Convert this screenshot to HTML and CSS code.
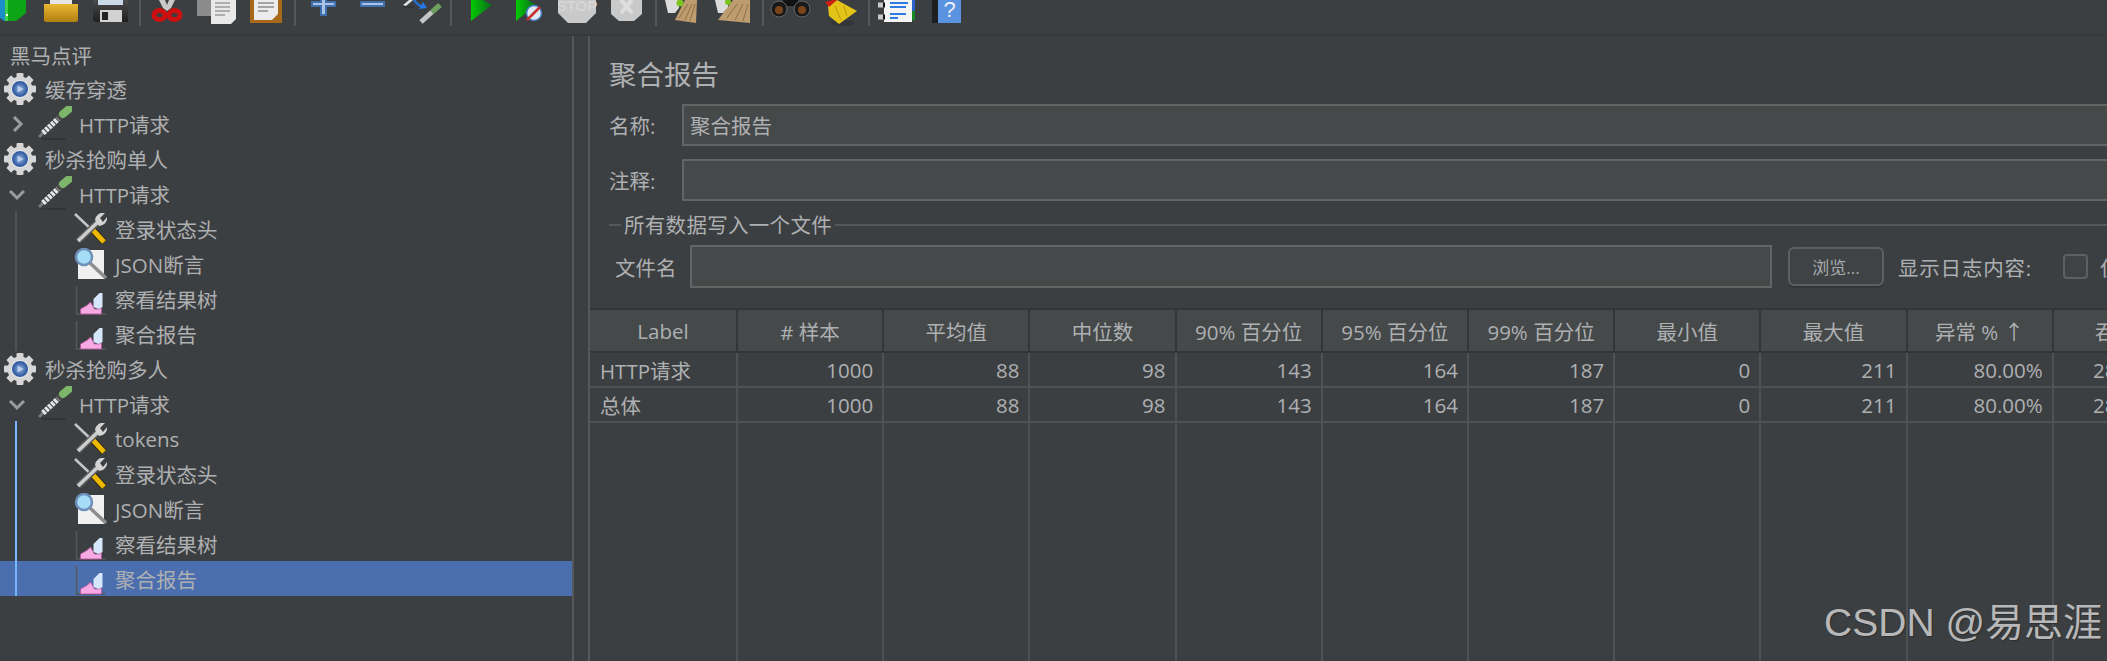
FILE: index.html
```html
<!DOCTYPE html>
<html lang="zh">

<head>
    <meta charset="utf-8">
    <title>聚合报告</title>
    <link rel="stylesheet" href="styles.css">
</head>

<body>
    <!-- shared icons for the tree -->
    <svg class="defs">
        <defs>
            <radialGradient id="hub"><stop offset="0" stop-color="#8fb0e0"/><stop offset="1" stop-color="#1f4a94"/></radialGradient>
            <linearGradient id="gold" x1="0" y1="0" x2="0" y2="1"><stop offset="0" stop-color="#eab733"/><stop offset="1" stop-color="#b07f12"/></linearGradient>
            <linearGradient id="run" x1="0" y1="0" x2="1" y2="0"><stop offset="0" stop-color="#05c905"/><stop offset="1" stop-color="#0a6a1c"/></linearGradient>
            <linearGradient id="disk" x1="0" y1="0" x2="0" y2="1"><stop offset="0" stop-color="#4a4a4c"/><stop offset="1" stop-color="#1f1f20"/></linearGradient>
        </defs>
        <symbol id="i-gear" viewBox="0 0 34 32">
            <g fill="#d6d6d6">
                <circle cx="17" cy="16" r="12.5"/>
                <rect x="13.5" y="0" width="7" height="32" rx="1"/>
                <rect x="13.5" y="0" width="7" height="32" rx="1" transform="rotate(45 17 16)"/>
                <rect x="13.5" y="0" width="7" height="32" rx="1" transform="rotate(90 17 16)"/>
                <rect x="13.5" y="0" width="7" height="32" rx="1" transform="rotate(135 17 16)"/>
            </g>
            <circle cx="17" cy="16" r="8.5" fill="url(#hub)" stroke="#f2f2f2"/>
            <path d="M14.500 12.500L20.500 16L14.500 19.500Z" fill="#b9cdec"/>
        </symbol>
        <symbol id="i-sampler" viewBox="0 0 34 36">
            <path d="M3 33H28" stroke="#303234" stroke-width="1.500"/>
            <path d="M1 31L6 26" stroke="#77797b" stroke-width="3"/>
            <path d="M5 27L21 12" stroke="#e4e4e4" stroke-width="5.500" stroke-dasharray="3 1"/>
            <path d="M20 13L24 9" stroke="#4a4a4a" stroke-width="6.500"/>
            <path d="M25 8L31 3" stroke="#7db56a" stroke-width="8" stroke-linecap="round"/>
        </symbol>
        <symbol id="i-tools" viewBox="0 0 33 32">
            <path d="M1 1L20 19" stroke="#c4c4c4" stroke-width="2.500"/>
            <path d="M19 17L30 29" stroke="#2b2414" stroke-width="7"/>
            <path d="M19 17L30 29" stroke="#edb900" stroke-width="5"/>
            <path d="M4 28L25 8" stroke="#5c5c5c" stroke-width="6.500"/>
            <path d="M4 28L25 8" stroke="#cdcdcd" stroke-width="3.500"/>
            <path d="M21 7A8 8 0 0 1 31 0L26 5L29 9L33 4A8 8 0 0 1 25 13Z" fill="#d4d4d4"/>
        </symbol>
        <symbol id="i-assert" viewBox="0 0 33 32">
            <rect x="4" y="2" width="26" height="29" fill="#f0f0f0"/>
            <path d="M16 15L32 30" stroke="#8d8d8d" stroke-width="3.500"/>
            <circle cx="10" cy="9" r="8" fill="#a5dcf6" stroke="#6d8fb9" stroke-width="2.500"/>
        </symbol>
        <symbol id="i-graph" viewBox="0 0 30 32">
            <path d="M1 3V31H30" fill="none" stroke="#55585a" stroke-width="1.500"/>
            <path d="M5 31V26L12 22L15 19L19 26H24L26 24V31Z" fill="#f6a9e2" stroke="#b0509c" stroke-width=".8"/>
            <path d="M18 24V16L24 10H27V24L23 26Z" fill="#d6e6fb"/>
        </symbol>
    </svg>

    <div class="toolbar">
        <svg width="44" height="34" viewBox="0 0 44 34"><path d="M8 0H26V13L16 21H8Z" fill="#0ca515"/><path d="M0 0H8V21H4L0 18Z" fill="#1a8fc8"/><rect x="5" y="0" width="3" height="21" fill="#3fd04a"/><rect x="6" y="14" width="2" height="2" fill="#fff"/></svg>
        <svg width="49" height="34" viewBox="0 0 49 34"><rect x="6" y="0" width="22" height="6" fill="#e6e6e6"/><path d="M0 4H34V21L32 22H2L0 21Z" fill="url(#gold)"/></svg>
        <svg width="46" height="34" viewBox="0 0 46 34"><path d="M0 0H35V22H2L0 20Z" fill="url(#disk)"/><rect x="5" y="0" width="25" height="5" fill="#c9d8e8"/><rect x="7" y="10" width="22" height="12" fill="#d2d2d2"/><rect x="9" y="12" width="6" height="8" fill="#232323"/></svg>
        <span class="sep"></span>
        <svg width="56" height="34" viewBox="-11 0 56 34"><path d="M11 8L7 0H13L15 5L17 0H23L19 8L15 11Z" fill="#c9c9c9"/><ellipse cx="7.500" cy="15" rx="5.500" ry="4.500" fill="none" stroke="#cc0f0f" stroke-width="5"/><ellipse cx="22.500" cy="15" rx="5.500" ry="4.500" fill="none" stroke="#cc0f0f" stroke-width="5"/></svg>
        <svg width="53" height="34" viewBox="0 0 53 34"><rect x="0" y="0" width="22" height="16" fill="#8b8b8b"/><path d="M14 0H39V19L34 24H14Z" fill="#e9e9e9"/><path d="M18 3H33M18 7H33M18 11H33M18 15H28" stroke="#9b9b9b" stroke-width="1.500"/></svg>
        <svg width="44" height="34" viewBox="0 0 44 34"><rect x="0" y="0" width="32" height="23" fill="#a8691a"/><path d="M4 0H28V14L22 20H4Z" fill="#ececec"/><path d="M8 3H24M8 7H24M8 11H18" stroke="#8f8f8f" stroke-width="1.500"/></svg>
        <span class="sep"></span>
        <svg width="64" height="34" viewBox="-15 0 64 34"><path d="M0 1H9V0H16V1H25V7H16V16H9V7H0Z" fill="#3f6fae"/><path d="M2 3H23V5H2ZM11 0H14V14H11Z" fill="#a9c5e5"/></svg>
        <svg width="43" height="34" viewBox="0 0 43 34"><rect x="0" y="1" width="25" height="6" fill="#3f6fae"/><rect x="2" y="3" width="21" height="2" fill="#a9c5e5"/></svg>
        <svg width="47" height="34" viewBox="0 0 47 34"><path d="M0 5L6 0H10L3 6Z" fill="#e2e2e2"/><path d="M0 7H10" stroke="#2f3133" stroke-width="1.500"/><path d="M11 0Q15 6 21 7" fill="none" stroke="#2278e6" stroke-width="2"/><path d="M24 8L16 9L20 2Z" fill="#2278e6"/><path d="M18 22L29 12" stroke="#c6c6c6" stroke-width="5"/><path d="M29 12L37 5" stroke="#6d9f60" stroke-width="5.500"/></svg>
        <span class="sep"></span>
        <svg width="64" height="34" viewBox="-19 0 64 34"><path d="M0 0H12L21 5L0 21Z" fill="url(#run)"/></svg>
        <svg width="42" height="34" viewBox="0 0 42 34"><path d="M0 0H12L20 5L0 21Z" fill="url(#run)"/><circle cx="18" cy="13" r="7.500" fill="#dfe9f7" stroke="#4a7cc0" stroke-width="1.500"/><path d="M11 20L24 7" stroke="#c9302c" stroke-width="2.500"/></svg>
        <svg width="53" height="34" viewBox="0 0 53 34"><path d="M0 0H38V13L28 23H10L0 13Z" fill="#c9c9c9"/><text x="19" y="11" text-anchor="middle" class="stop-word">STOP</text></svg>
        <svg width="44" height="34" viewBox="0 0 44 34"><path d="M0 0H31V14L23 21H8L0 14Z" fill="#c9c9c9"/><path d="M10 0L21 13M21 0L10 13" stroke="#dedede" stroke-width="4"/></svg>
        <span class="sep"></span>
        <svg width="58" height="34" viewBox="-8 0 58 34"><path d="M0 0H14V8L10 13H3Z" fill="#dcdcdc"/><path d="M10 20L31 23L32 0H20Z" fill="#bd9c70"/><path d="M14 18L23 4M20 20L27 4M25 21L30 4" stroke="#8f6f45"/><circle cx="15" cy="3" r="3.500" fill="#7ec41e"/></svg>
        <svg width="47" height="34" viewBox="0 0 47 34"><path d="M0 0H13V8L8 13H3Z" fill="#dcdcdc"/><path d="M3 20L35 23L35 0H18Z" fill="#bd9c70"/><path d="M12 18L22 4M20 20L28 4M28 21L33 4" stroke="#8f6f45"/><circle cx="13" cy="2" r="3" fill="#7ec41e"/></svg>
        <span class="sep"></span>
        <svg width="59" height="34" viewBox="-7 0 59 34"><path d="M12 0H27V6H12Z" fill="#111"/><circle cx="8" cy="9" r="8" fill="#191919" stroke="#666"/><circle cx="31" cy="9" r="8" fill="#191919" stroke="#666"/><circle cx="8" cy="10" r="4" fill="#7a451a"/><circle cx="31" cy="10" r="4" fill="#7a451a"/></svg>
        <svg width="45" height="34" viewBox="0 0 45 34"><ellipse cx="20" cy="23" rx="12" ry="3" fill="#333537"/><path d="M5 6L14 0L34 11L16 24L6 16Z" fill="#e3c316"/><path d="M12 6L18 20M21 6L24 16" stroke="#b8970f"/><path d="M2 2L10 0H14L6 7Z" fill="#cc1f12"/></svg>
        <span class="sep"></span>
        <svg width="62" height="34" viewBox="-8 0 62 34"><rect x="6" y="0" width="28" height="22" fill="#f4f4f4"/><rect x="34" y="0" width="3" height="11" fill="#2a62c8"/><rect x="34" y="11" width="3" height="9" fill="#178a1f"/><path d="M0 5H7M0 17H7" stroke="#c8c8c8" stroke-width="5"/><path d="M5 5H7M5 17H7" stroke="#111" stroke-width="5"/><path d="M12 3H30M12 7H28M12 14H28M12 18H20" stroke="#2d7be0" stroke-width="1.800"/></svg>
        <svg width="40" height="34" viewBox="0 0 40 34"><rect x="0" y="0" width="6" height="23" fill="#1e1e1e"/><rect x="6" y="0" width="23" height="23" fill="#5a93e0"/><text x="17.500" y="17" text-anchor="middle" class="help-mark">?</text></svg>
    </div>

    <div class="workspace">
        <div class="tree">
            <div class="row root">黑马点评</div>
            <div class="row lvl0"><svg class="ic-gear"><use href="#i-gear"/></svg>缓存穿透</div>
            <div class="row lvl1">
                <svg class="chev" viewBox="0 0 16 16"><path d="M5 1L12 8L5 15" fill="none" stroke="#9c9c9c" stroke-width="3"/></svg>
                <svg class="ic-sampler"><use href="#i-sampler"/></svg>HTTP请求
            </div>
            <div class="row lvl0"><svg class="ic-gear"><use href="#i-gear"/></svg>秒杀抢购单人</div>
            <div class="row lvl1">
                <svg class="chev" viewBox="0 0 16 16"><path d="M1 5L8 12L15 5" fill="none" stroke="#9c9c9c" stroke-width="3"/></svg>
                <svg class="ic-sampler"><use href="#i-sampler"/></svg>HTTP请求
            </div>
            <div class="group">
                <div class="row lvl2"><svg class="ic-leaf"><use href="#i-tools"/></svg>登录状态头</div>
                <div class="row lvl2"><svg class="ic-leaf"><use href="#i-assert"/></svg>JSON断言</div>
                <div class="row lvl2"><svg class="ic-leaf"><use href="#i-graph"/></svg>察看结果树</div>
                <div class="row lvl2"><svg class="ic-leaf"><use href="#i-graph"/></svg>聚合报告</div>
            </div>
            <div class="row lvl0"><svg class="ic-gear"><use href="#i-gear"/></svg>秒杀抢购多人</div>
            <div class="row lvl1">
                <svg class="chev" viewBox="0 0 16 16"><path d="M1 5L8 12L15 5" fill="none" stroke="#9c9c9c" stroke-width="3"/></svg>
                <svg class="ic-sampler"><use href="#i-sampler"/></svg>HTTP请求
            </div>
            <div class="group active">
                <div class="row lvl2"><svg class="ic-leaf"><use href="#i-tools"/></svg>tokens</div>
                <div class="row lvl2"><svg class="ic-leaf"><use href="#i-tools"/></svg>登录状态头</div>
                <div class="row lvl2"><svg class="ic-leaf"><use href="#i-assert"/></svg>JSON断言</div>
                <div class="row lvl2"><svg class="ic-leaf"><use href="#i-graph"/></svg>察看结果树</div>
                <div class="row lvl2 selected"><svg class="ic-leaf"><use href="#i-graph"/></svg>聚合报告</div>
            </div>
        </div>

        <div class="main">
            <div class="head">
                <h1>聚合报告</h1>
                <div class="field">
                    <label>名称:</label>
                    <input type="text" value="聚合报告">
                </div>
                <div class="field">
                    <label>注释:</label>
                    <input type="text">
                </div>
                <fieldset>
                    <legend>所有数据写入一个文件</legend>
                    <div class="file-row">
                        <label>文件名</label>
                        <input type="text">
                        <button>浏览...</button>
                        <span class="log-label">显示日志内容:</span>
                        <span class="check"></span>
                        <span>仅日志错误</span>
                    </div>
                </fieldset>
            </div>

            <table class="report">
                <thead>
                    <tr>
                        <th>Label</th>
                        <th># 样本</th>
                        <th>平均值</th>
                        <th>中位数</th>
                        <th>90% 百分位</th>
                        <th>95% 百分位</th>
                        <th>99% 百分位</th>
                        <th>最小值</th>
                        <th>最大值</th>
                        <th>异常 % ↑</th>
                        <th>吞吐量</th>
                    </tr>
                </thead>
                <tbody>
                    <tr>
                        <td>HTTP请求</td><td>1000</td><td>88</td><td>98</td><td>143</td><td>164</td><td>187</td><td>0</td><td>211</td><td>80.00%</td><td>28.13/sec</td>
                    </tr>
                    <tr>
                        <td>总体</td><td>1000</td><td>88</td><td>98</td><td>143</td><td>164</td><td>187</td><td>0</td><td>211</td><td>80.00%</td><td>28.13/sec</td>
                    </tr>
                    <tr class="filler">
                        <td></td><td></td><td></td><td></td><td></td><td></td><td></td><td></td><td></td><td></td><td></td>
                    </tr>
                </tbody>
            </table>
        </div>
    </div>

    <div class="watermark">CSDN @易思涯</div>
</body>

</html>
```

FILE: styles.css
```css
/* Page */
html,
body {
    height: 100%;
}

body {
    margin: 0;
    overflow: hidden;
    position: relative;
    background-color: #3c3f41;
    color: #aeb0b2;
    font-family: "Open Sans", "Noto Sans CJK SC", sans-serif;
    font-size: 20.5px;
}

.defs {
    position: absolute;
    width: 0;
    height: 0;
}

/* Toolbar */
.toolbar {
    display: flex;
    height: 34px;
    border-bottom: 2px solid #363839;
    overflow: hidden;
}

.toolbar svg {
    flex: none;
    display: block;
}

.sep {
    flex: none;
    width: 2px;
    height: 26px;
    background-color: #55585a;
}

.stop-word {
    font-family: "Liberation Sans", sans-serif;
    font-size: 15px;
    font-weight: 700;
    fill: #d6d6d6;
}

.help-mark {
    font-family: "Liberation Sans", sans-serif;
    font-size: 22px;
    fill: #e8f0fb;
}

/* Split layout */
.workspace {
    display: flex;
    height: 625px;
}

/* Tree */
.tree {
    flex: none;
    width: 572px;
    border-right: 2px solid #55585a;
}

.row {
    display: flex;
    align-items: center;
    height: 35px;
    white-space: nowrap;
}

.root {
    padding-left: 10px;
    padding-top: 2px;
    box-sizing: border-box;
}

.lvl0 {
    padding-left: 3px;
}

.lvl1 {
    padding-left: 9px;
}

.lvl2 {
    padding-left: 74px;
}

.ic-gear {
    width: 34px;
    height: 32px;
    margin-right: 8px;
}

.ic-sampler {
    width: 34px;
    height: 36px;
    margin-right: 7px;
}

.ic-leaf {
    width: 33px;
    height: 32px;
    margin-right: 8px;
}

.chev {
    width: 16px;
    height: 16px;
    margin-right: 13px;
}

.group {
    position: relative;
}

.group::before {
    content: "";
    position: absolute;
    left: 15px;
    top: 0;
    bottom: 0;
    width: 2px;
    background-color: #4f5254;
}

.group.active::before {
    background-color: #75b5ff;
}

.selected {
    background-color: #4b6eaf;
}

/* Right panel */
.main {
    flex: none;
    width: 1700px;
    margin-left: 14px;
    border-left: 2px solid #55585a;
}

.head {
    padding: 20px 0 20px 19px;
}

h1 {
    margin: 0 0 10px;
    font-size: 27.5px;
    font-weight: 400;
    line-height: 38px;
}

.field {
    display: flex;
    align-items: center;
    margin-bottom: 13px;
}

.field label {
    flex: none;
    width: 73px;
}

input {
    flex: 1;
    box-sizing: border-box;
    height: 42px;
    padding: 0 6px;
    border: 2px solid #646464;
    background-color: #45494a;
    color: #aeb0b2;
    font: inherit;
}

fieldset {
    margin: -3px 0 0;
    padding: 6px 0 0 6px;
    border: 0;
    border-top: 2px solid #55585a;
}

legend {
    margin-left: 6px;
    padding: 0 3px;
    letter-spacing: .3px;
    line-height: 28px;
}

.file-row {
    display: flex;
    align-items: center;
    height: 43px;
}

.file-row label {
    flex: none;
    width: 75px;
}

.file-row input {
    flex: none;
    width: 1082px;
    height: 43px;
}

button {
    flex: none;
    box-sizing: border-box;
    width: 96px;
    height: 39px;
    margin: 0 14px 0 16px;
    border: 2px solid #5e6060;
    border-radius: 6px;
    box-shadow: 0 2px 0 #333537;
    background-color: #3f4345;
    color: #a8aaac;
    font: inherit;
    font-size: 17px;
}

.log-label {
    flex: none;
    width: 165px;
    letter-spacing: .8px;
}

.check {
    flex: none;
    box-sizing: border-box;
    width: 25px;
    height: 25px;
    margin-right: 12px;
    border: 2px solid #5e6060;
    border-radius: 4px;
    background-color: #3f4345;
}

.file-row span:last-child {
    white-space: nowrap;
}

/* Report table */
.report {
    width: 1610px;
    table-layout: fixed;
    border-collapse: separate;
    border-spacing: 0;
}

.report th,
.report td {
    box-sizing: border-box;
    padding: 0 9px;
    font-weight: 400;
    white-space: nowrap;
    overflow: hidden;
}

.report th {
    height: 45px;
    background-color: #45494a;
    border-top: 2px solid #333537;
    border-right: 2px solid #333537;
    border-bottom: 2px solid #333537;
    text-align: center;
}

.report th:first-child {
    width: 148px;
}

.report td {
    height: 35px;
    border-right: 2px solid #4f5254;
    border-bottom: 2px solid #4f5254;
    text-align: right;
}

.report td:first-child {
    padding-left: 10px;
    text-align: left;
}

.report td:last-child {
    padding-right: 14px;
}

.filler td {
    height: 240px;
    border-bottom: 0;
}

/* Overlay */
.watermark {
    position: absolute;
    right: 5px;
    bottom: 15px;
    color: #b8b8b8;
    font-family: "Liberation Sans", "Noto Sans CJK SC", sans-serif;
    font-size: 39px;
    line-height: 46px;
    white-space: nowrap;
    text-shadow: 1px 1px 1px #2c2e30;
}
```
